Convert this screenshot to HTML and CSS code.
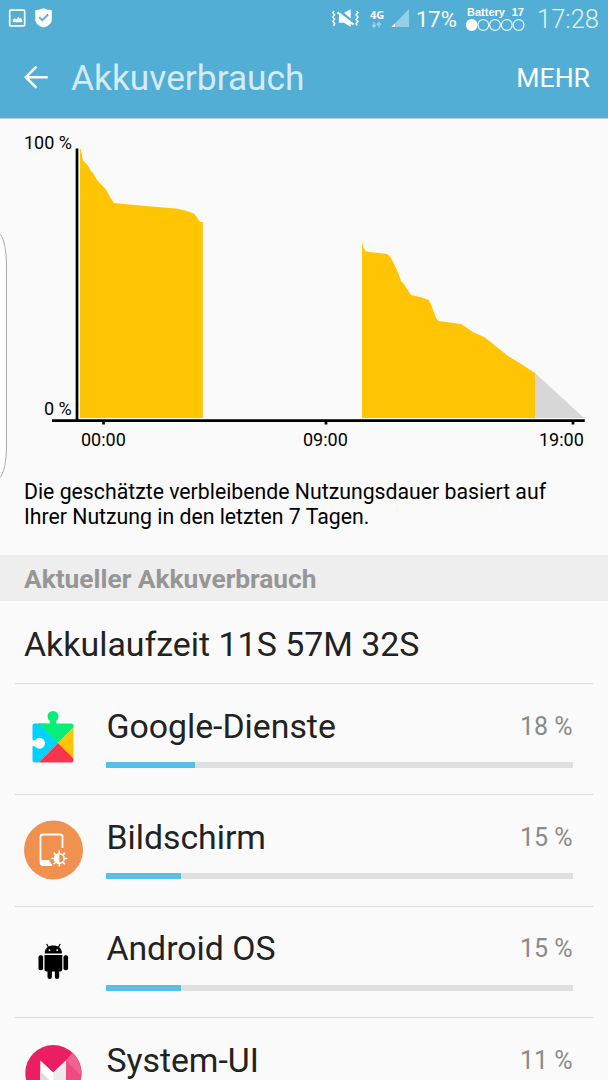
FILE: index.html
```html
<!DOCTYPE html>
<html lang="de">

<head>
    <meta charset="UTF-8">
    <meta name="viewport" content="width=device-width, initial-scale=1.0">
    <title>Akkuverbrauch</title>
    <link rel="stylesheet" href="styles.css">
</head>

<body>
    <header>
        <div class="statusbar">
            <svg class="notifications" width="60" height="38" viewBox="0 0 60 38">
                <rect x="9.7" y="10.2" width="15" height="15.6" rx="1" fill="none" stroke="#fff" stroke-width="1.7"/>
                <path d="M12.8 22.3v-2.6l1.6-1.7 1.6 1.4 2.5-2.7 1.2 2 1-1 1.5 2.2v2.4z" fill="#fff"/>
                <path d="M35.3 10.2Q40 9.9 43.5 8.2Q47 9.9 51.8 10.2V20Q51.8 25.1 43.5 27.5Q35.3 25.1 35.3 20z" fill="#fff"/>
                <path d="M39.2 17.2l3.1 3.1 5.8-5.8" fill="none" stroke="#52aed4" stroke-width="1.8"/>
            </svg>
            <svg class="mute" width="28" height="38" viewBox="0 0 28 38">
                <path d="M2 11l-1.3 1.6 2 2.2-2 2.2 2 2.2-2 2.2 2 2.2L1.5 26M24.5 11l1.5 1.7-2 2.2 2 2.2-2 2.2 2 2.2-2 2.2 1.2 1.8" fill="none" stroke="#fff" stroke-width="1.4"/>
                <path d="M12 12.7L18.7 9.3V18.5zM7 14.8h2l9.7 7.2v5L12 22.8H6.8z" fill="#fff"/>
                <path d="M5.5 12.3L21.5 24.5" stroke="#fff" stroke-width="2.2"/>
            </svg>
            <div class="network">
                <span>4G</span>
                <svg width="12" height="6" viewBox="0 0 12 6">
                    <path d="M3 0v5M1 3l2 2 2-2M8 5.5V.8M6 2.7l2-2 2 2" fill="none" stroke="#a3d6ea" stroke-width="1.3"/>
                </svg>
            </div>
            <svg class="signal" width="19" height="38" viewBox="0 0 19 38">
                <path d="M18 9v18H.5z" fill="#97cfe6"/>
                <path d="M4 23.5V27H.5z" fill="#fff"/>
            </svg>
            <span class="percent">17%</span>
            <div class="battery">
                <div class="battery-label"><span>Battery</span><span>17</span></div>
                <svg width="60" height="14" viewBox="0 0 60 14">
                    <circle cx="5.7" cy="7" r="5.9" fill="#fff"/>
                    <g fill="none" stroke="#e9f5fa" stroke-width="1.2">
                        <circle cx="17.3" cy="7" r="5.4"/>
                        <circle cx="29" cy="7" r="5.4"/>
                        <circle cx="40.8" cy="7" r="5.4"/>
                        <circle cx="52.6" cy="7" r="5.4"/>
                    </g>
                </svg>
            </div>
            <span class="clock">17:28</span>
        </div>
        <div class="toolbar">
            <svg class="back" width="24" height="24" viewBox="0 0 24 24">
                <path d="M12.5 .5L1.8 11.2l10.7 10.7M2 11.2h21.7" fill="none" stroke="#fff" stroke-width="2.5"/>
            </svg>
            <h1>Akkuverbrauch</h1>
            <span class="more">MEHR</span>
        </div>
    </header>

    <svg class="chart" width="608" height="341" viewBox="0 119 608 341">
        <g class="chart-label">
            <text x="24" y="148.5">100 %</text>
            <text x="44" y="415">0 %</text>
            <text x="81" y="445.5">00:00</text>
            <text x="303" y="445.5">09:00</text>
            <text x="539" y="445.5">19:00</text>
        </g>
        <path class="used" d="M80 418V149H80.7L83 160.5L87.5 165L91 171L93 173L97 180L106 189.5L110 197L114 203L145 206L176 208.5L185 210.5L194 213.5L197 217.5L200 222H202.8V418z"/>
        <path class="used" d="M362 418V241L363.5 248L366 251.5L387 254L390.5 257L395 266L399 275L401 281L404 284L407 289L411 295L420 297L429 300L432 307L436 318L438.5 321L461 324L473 332L485 337.5L508 356L518 362L535 373V418z"/>
        <path class="forecast" d="M535 373L584 418H535z"/>
        <path class="axis" d="M77 148.5V420M52 420.7H584.7"/>
        <path class="axis" d="M103.5 420V424.5M326 420V424.5M573 420V424.5"/>
    </svg>

    <!-- handle of the edge panel -->
    <svg class="edge" width="9" height="250" viewBox="0 0 9 250">
        <path d="M-1 1C4 5 6.5 18 6.5 35V212C6.5 231 4 241-1 247" fill="#fff" stroke="#aaa"/>
    </svg>

    <p class="hint">Die geschätzte verbleibende Nutzungsdauer basiert auf<br>Ihrer Nutzung in den letzten 7 Tagen.</p>

    <h2>Aktueller Akkuverbrauch</h2>
    <div class="runtime">Akkulaufzeit 11S 57M 32S</div>

    <ul class="apps">
        <li>
            <svg class="icon" width="60" height="60" viewBox="0 0 60 60">
                <defs>
                    <clipPath id="puzzle">
                        <path d="M10.500 14.500H25.500Q26.500 12.500 25.300 11.500A5.500 5.500 0 1 1 32.700 11.500Q31.500 12.500 32.500 14.500H47Q49.500 14.500 49.500 17V51Q49.500 53.500 47 53.500H11Q8.500 53.500 8.500 51V37.500Q10.500 36.500 11.500 38A5.500 5.500 0 1 0 11.500 30.500Q10.500 32 8.500 31V16.500Q8.500 14.500 10.500 14.500z"/>
                    </clipPath>
                </defs>
                <g clip-path="url(#puzzle)">
                    <path d="M8 0H14L34 34L14 54H8z" fill="#00d2ff"/>
                    <path d="M14 14.5V0H50V18L34 34z" fill="#05ef76"/>
                    <path d="M50 18V50L34 34z" fill="#ffc400"/>
                    <path d="M34 34L50 50V54H14z" fill="#f5364c"/>
                </g>
            </svg>
            <div class="info">
                <div class="line"><span class="name">Google-Dienste</span><span class="share">18 %</span></div>
                <div class="bar"><div class="fill" style="width: 19%"></div></div>
            </div>
        </li>
        <li>
            <svg class="icon" width="60" height="60" viewBox="0 0 60 60">
                <circle cx="29.5" cy="30" r="29.5" fill="#f09150"/>
                <path d="M38.5 28V17Q38.5 14.5 36 14.5H19Q16.5 14.5 16.5 17V42.5Q16.5 45 19 45H28" fill="none" stroke="#fff" stroke-width="1.8"/>
                <path d="M16.5 40H25L28.5 45.8H18.5Q16.5 45 16.5 43z" fill="#fff"/>
                <g stroke="#fff" stroke-width="1.7">
                    <path d="M35.3 30.5V46.5M27.3 38.5H43.3M29.7 32.9L40.9 44.1M40.9 32.9L29.7 44.1"/>
                    <circle cx="35.3" cy="38.5" r="4.8" fill="#f09150" stroke-width="1.5"/>
                </g>
                <path d="M35.3 33.5a5 5 0 0 0 0 10z" fill="#fff"/>
            </svg>
            <div class="info">
                <div class="line"><span class="name">Bildschirm</span><span class="share">15 %</span></div>
                <div class="bar"><div class="fill" style="width: 16%"></div></div>
            </div>
        </li>
        <li>
            <svg class="icon" width="60" height="60" viewBox="0 0 60 60">
                <path d="M20.7 21.5C20.7 16 24.5 13.5 29.3 13.5S38 16 38 21.5z"/>
                <path d="M24.5 15.5L22.7 12M34.3 15.5L36.2 12" stroke="#000" stroke-width="1.2"/>
                <rect x="14.5" y="23.3" width="4.6" height="15" rx="2"/>
                <rect x="39.5" y="23.3" width="4.6" height="15" rx="2"/>
                <path d="M20.5 23H38.3V37.5Q38.3 39.5 36.3 39.5H35.2V45Q35.2 47 33 47T30.9 45V39.5H27.9V45Q27.9 47 25.7 47T23.5 45V39.5H22.5Q20.5 39.5 20.5 37.5z"/>
                <circle cx="25.5" cy="18.2" r=".9" fill="#fff"/>
                <circle cx="33.2" cy="18.2" r=".9" fill="#fff"/>
            </svg>
            <div class="info">
                <div class="line"><span class="name">Android OS</span><span class="share">15 %</span></div>
                <div class="bar"><div class="fill" style="width: 16%"></div></div>
            </div>
        </li>
        <li>
            <svg class="icon" width="60" height="60" viewBox="0 0 60 60">
                <circle cx="29.3" cy="30" r="28" fill="#e91e63"/>
                <path d="M42 17.5L48.5 9.7A28 28 0 0 1 55 42L42 55z" fill="#ee4a83"/>
                <path d="M42 17.5L48.5 9.7A28 28 0 0 1 56.5 32z" fill="#f06292"/>
                <path d="M16.3 17.5L29.3 29.5L42 17.5V60H16.3z" fill="#fff"/>
                <path d="M16.3 28L29.3 41V60H16.3z" fill="#ddd"/>
                <path d="M42 17.5V60H29.3V29.5z" fill="#ececec"/>
            </svg>
            <div class="info">
                <div class="line"><span class="name">System-UI</span><span class="share">11 %</span></div>
                <div class="bar"><div class="fill" style="width: 12%"></div></div>
            </div>
        </li>
    </ul>
</body>

</html>
```

FILE: styles.css
```css
* {
    box-sizing: border-box;
}

body {
    position: relative;
    width: 608px;
    height: 1080px;
    margin: 0;
    overflow: hidden;
    font-family: Roboto, sans-serif;
    background-color: #fafafa;
    color: #222;
}

svg {
    display: block;
    flex-shrink: 0;
}

header {
    height: 119px;
    background-color: #52aed4;
    border-bottom: 1px solid #c5c9cf;
    color: #fff;
}

.statusbar {
    display: flex;
    height: 38px;
    align-items: center;
    padding-right: 9px;
}

.notifications {
    margin-right: auto;
}

.mute {
    margin-right: 10px;
}

.network {
    width: 17px;
    margin-right: 4px;
    padding-bottom: 1px;
    font-family: "Open Sans", sans-serif;
    font-size: 11px;
    font-weight: 700;
    line-height: 10px;
}

.network svg {
    margin: 2px 0 0 1px;
}

.signal {
    margin-right: 6px;
}

.percent {
    width: 41px;
    font-size: 22px;
    white-space: nowrap;
}

.battery {
    width: 60px;
    margin: 0 11px 0 9px;
    font-family: "Liberation Sans", sans-serif;
    font-size: 11px;
    font-weight: 700;
    line-height: 11px;
}

.battery svg {
    overflow: visible;
}

.battery-label {
    display: flex;
    justify-content: space-between;
    padding: 0 2px 0 1px;
}

.clock {
    width: 62px;
    font-size: 25.5px;
    font-weight: 300;
    color: #e2f2f9;
}

.toolbar {
    display: flex;
    height: 80px;
    align-items: center;
    padding: 0 18px 0 24px;
}

h1 {
    margin: 0 auto 0 23px;
    font-size: 35.3px;
    font-weight: 400;
    color: #d5ebf5;
}

.more {
    margin-bottom: 1px;
    font-size: 26.6px;
}

.chart-label {
    font-size: 18px;
    fill: #000;
}

.used {
    fill: #ffc403;
}

.forecast {
    fill: #d7d7d7;
}

.axis {
    fill: none;
    stroke: #000;
    stroke-width: 2.7px;
}

.edge {
    position: absolute;
    left: 0;
    top: 232px;
}

.hint {
    height: 95px;
    margin: 0;
    padding: 19px 24px 0;
    font-size: 21.25px;
    line-height: 25px;
    color: #000;
}

h2 {
    height: 46px;
    margin: 0;
    padding: 0 24px;
    background-color: #eee;
    font-size: 26.3px;
    font-weight: 700;
    line-height: 48px;
    color: #969696;
}

.runtime {
    height: 83px;
    margin: 0 15px;
    padding-left: 9px;
    border-bottom: 1px solid #dadada;
    font-size: 33.9px;
    line-height: 88px;
}

.apps {
    margin: 0 15px;
    padding: 0;
    list-style: none;
}

.apps li {
    display: flex;
    height: 111.4px;
    padding: 0 20.5px 0 9px;
    border-bottom: 1px solid #dadada;
}

.icon {
    margin-top: 25px;
}

.info {
    flex: 1;
    margin-left: 22.4px;
}

.line {
    display: flex;
    height: 78px;
    justify-content: space-between;
    align-items: center;
    padding-top: 6.4px;
}

.name {
    font-size: 33.8px;
}

.share {
    font-size: 25px;
    color: #8a8a8a;
}

.bar {
    height: 6px;
    background-color: #e0e0e0;
}

.fill {
    height: 6px;
    background-color: #55bfe6;
}
```
